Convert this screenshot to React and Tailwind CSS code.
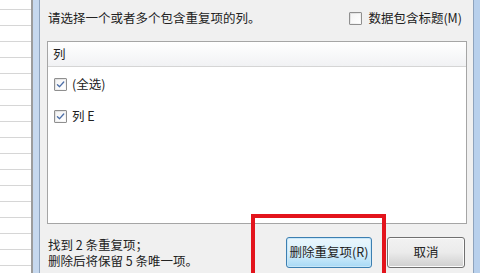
import React from "react";

const font = { fontFamily: '"Microsoft YaHei", "Noto Sans CJK SC", "Noto Sans", sans-serif' };

function Check({ checked }) {
    return (
        <span className="flex h-[13px] w-[13px] shrink-0 items-center justify-center rounded-[1px] border border-[#8f8f8f] bg-gradient-to-br from-[#dcdcdc] to-[#fbfbfb]">
            <span className="flex h-[9px] w-[9px] items-center justify-center bg-gradient-to-br from-[#f4f4f4] to-white">
                {checked && (
                    <svg viewBox="0 0 10 10" className="h-[9px] w-[9px]" aria-hidden>
                        <path d="M1.6 5.2 L4 7.4 L8.6 2.2" fill="none" stroke="#4d6fa8" strokeWidth="1.5" strokeLinecap="round" strokeLinejoin="round" />
                    </svg>
                )}
            </span>
        </span>
    );
}

function SheetColumn() {
    const rows = Array.from({ length: 17 });
    return (
        <div className="flex w-[31px] shrink-0 flex-col bg-white pt-[9px]">
            {rows.map((_, i) => (
                <div key={i} className="h-[16px] shrink-0 border-t border-[#d6d6d6]" />
            ))}
        </div>
    );
}

export default function App() {
    return (
        <div className="relative flex h-[273px] w-[480px] overflow-hidden bg-white text-[12.5px] leading-none text-[#222]" style={font}>
            <SheetColumn />
            <div className="w-[2px] shrink-0 bg-[#9c9c9c]" />
            <div className="w-[6px] shrink-0 bg-[#c6d8ee]" />
            <div className="w-px shrink-0 bg-[#8ea3bd]" />

            {/* dialog body */}
            <div className="flex min-w-0 flex-1 flex-col bg-[#f0f0f0] pl-[7px] pr-[6px]">
                <div className="flex h-[20px] items-center pt-[16px]">
                    <span className="pl-px">请选择一个或者多个包含重复项的列。</span>
                    <span className="ml-auto flex items-center gap-[6px] pr-[5px]">
                        <Check checked={false} />
                        <span>数据包含标题(M)</span>
                    </span>
                </div>

                <div className="mt-[21px] flex h-[183px] flex-col border border-[#a5a5a5] bg-white">
                    <div className="flex h-[25px] shrink-0 items-center border-b border-[#d5d5d5] bg-gradient-to-b from-white to-[#f1f2f4] pl-[5px]">
                        列
                    </div>
                    <div className="flex flex-col gap-[19px] pl-[6px] pt-[11px]">
                        <div className="flex items-center gap-[5px]">
                            <Check checked />
                            <span>(全选)</span>
                        </div>
                        <div className="flex items-center gap-[5px]">
                            <Check checked />
                            <span>列 E</span>
                        </div>
                    </div>
                </div>

                <div className="mt-[13px] flex items-start">
                    <p className="pl-px leading-[16px]">
                        找到 2 条重复项；
                        <br />
                        删除后将保留 5 条唯一项。
                    </p>
                    <div className="ml-auto flex gap-[15px] pr-[2px]">
                        <button
                            type="button"
                            className="flex h-[31px] w-[86px] items-center justify-center rounded-[3px] border border-[#3c7fb1] bg-gradient-to-b from-[#eaf6fd] via-[#d9f0fc] to-[#a7d9f5] shadow-[inset_0_0_0_1px_#c8e7f8] text-[12.5px]"
                        >
                            删除重复项(R)
                        </button>
                        <button
                            type="button"
                            className="flex h-[31px] w-[78px] items-center justify-center rounded-[3px] border border-[#707070] bg-gradient-to-b from-[#f2f2f2] via-[#ebebeb] to-[#cfcfcf] shadow-[inset_0_0_0_1px_#fcfcfc] text-[12.5px]"
                        >
                            取消
                        </button>
                    </div>
                </div>
            </div>

            <div className="w-px shrink-0 bg-[#8ea3bd]" />
            <div className="w-[6px] shrink-0 bg-[#b8d0ec]" />

            {/* annotation */}
            <div className="pointer-events-none absolute left-[251px] top-[214px] h-[70px] w-[135px] border-4 border-[#e3141c]" />
        </div>
    );
}
